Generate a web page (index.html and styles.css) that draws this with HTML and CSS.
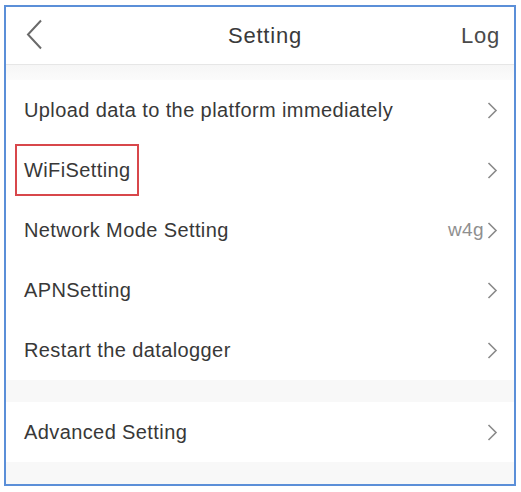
FILE: index.html
```html
<!DOCTYPE html>
<html>
<head>
  <title>Setting</title>
  <link rel="stylesheet" href="styles.css">
</head>
<body>
  <div class="frame">
    <div class="header">
      <span class="back">
        <svg width="17" height="31" viewBox="0 0 17 31"><path d="M15 1.5 L2 15.5 L15 29.5" fill="none" stroke="#6a6a6a" stroke-width="2"/></svg>
      </span>
      <span class="title">Setting</span>
      <span class="log">Log</span>
    </div>

    <div class="band top"></div>

    <div class="list">
      <div class="row">
        <span class="label">Upload data to the platform immediately</span>
        <span class="chev"><svg width="11" height="17" viewBox="0 0 11 17"><path d="M1.5 1 L9 8.5 L1.5 16" fill="none" stroke="#8a8a8a" stroke-width="1.6"/></svg></span>
      </div>
      <div class="row">
        <span class="label marked">WiFiSetting</span>
        <span class="chev"><svg width="11" height="17" viewBox="0 0 11 17"><path d="M1.5 1 L9 8.5 L1.5 16" fill="none" stroke="#8a8a8a" stroke-width="1.6"/></svg></span>
      </div>
      <div class="row">
        <span class="label">Network Mode Setting</span>
        <span class="value">w4g</span>
        <span class="chev"><svg width="11" height="17" viewBox="0 0 11 17"><path d="M1.5 1 L9 8.5 L1.5 16" fill="none" stroke="#8a8a8a" stroke-width="1.6"/></svg></span>
      </div>
      <div class="row">
        <span class="label">APNSetting</span>
        <span class="chev"><svg width="11" height="17" viewBox="0 0 11 17"><path d="M1.5 1 L9 8.5 L1.5 16" fill="none" stroke="#8a8a8a" stroke-width="1.6"/></svg></span>
      </div>
      <div class="row">
        <span class="label">Restart the datalogger</span>
        <span class="chev"><svg width="11" height="17" viewBox="0 0 11 17"><path d="M1.5 1 L9 8.5 L1.5 16" fill="none" stroke="#8a8a8a" stroke-width="1.6"/></svg></span>
      </div>
    </div>

    <div class="band mid"></div>

    <div class="list">
      <div class="row">
        <span class="label">Advanced Setting</span>
        <span class="chev"><svg width="11" height="17" viewBox="0 0 11 17"><path d="M1.5 1 L9 8.5 L1.5 16" fill="none" stroke="#8a8a8a" stroke-width="1.6"/></svg></span>
      </div>
    </div>

    <div class="band bottom"></div>
  </div>
</body>
</html>
```

FILE: styles.css
```css
html, body {
  margin: 0;
  padding: 0;
  background-color: #fff;
}

body {
  font-family: "Liberation Sans", Arial, sans-serif;
  padding: 5px 5px 6px 4px;
}

.frame {
  box-sizing: border-box;
  width: 512px;
  height: 481px;
  border: 2px solid #5b8fd8;
  display: flex;
  flex-direction: column;
  background-color: #fff;
  overflow: hidden;
}

.header {
  height: 57px;
  border-bottom: 1px solid #e6e6e6;
  display: flex;
  align-items: center;
  padding: 0 14px 0 20px;
  color: #3a3a3a;
}

.back {
  width: 60px;
  display: flex;
  align-items: center;
  margin-top: -2px;
}

.title {
  flex: 1;
  text-align: center;
  font-size: 22px;
  letter-spacing: 0.8px;
  padding-left: 4px;
}

.log {
  width: 60px;
  text-align: right;
  font-size: 22px;
  letter-spacing: 0.8px;
  color: #4a4a4a;
}

.band {
  background-color: #f8f8f8;
}

.band.top {
  height: 15px;
  background: linear-gradient(#f6f6f6, #fbfbfb);
}

.band.mid {
  height: 22px;
}

.band.bottom {
  flex: 1;
}

.row {
  height: 60px;
  display: flex;
  align-items: center;
  padding: 0 16px 0 18px;
  font-size: 20px;
  letter-spacing: 0.4px;
  color: #383838;
}

.label {
  flex: 1;
}

.label.marked {
  flex: none;
  margin-left: -9px;
  padding: 13px 6px 12px 7px;
  border: 2px solid #d8474b;
  margin-right: auto;
}

.value {
  color: #8f8f8f;
  font-size: 19px;
  margin-right: 3px;
}

.chev {
  display: flex;
  align-items: center;
}
```
